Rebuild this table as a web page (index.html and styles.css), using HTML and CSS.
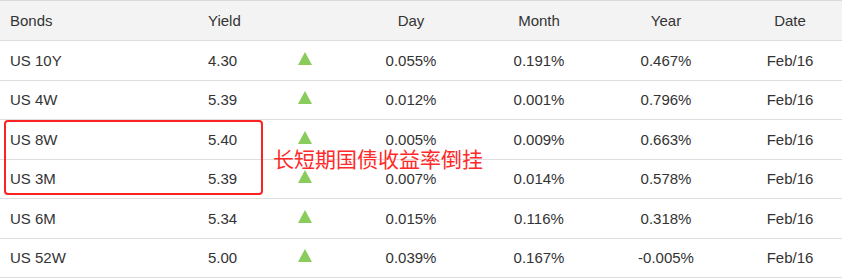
FILE: index.html
```html
<!DOCTYPE html>
<html>
<head>
<meta charset="utf-8">
<link rel="stylesheet" href="styles.css">
</head>
<body>
<div class="wrap">
  <div class="table">
    <div class="row head">
      <div class="c bond">Bonds</div>
      <div class="c yield">Yield</div>
      <div class="c arrow"></div>
      <div class="c mid">Day</div>
      <div class="c mid">Month</div>
      <div class="c mid">Year</div>
      <div class="c mid">Date</div>
    </div>
    <div class="row">
      <div class="c bond">US 10Y</div><div class="c yield">4.30</div>
      <div class="c arrow"><svg class="up" viewBox="0 0 14 13"><polygon points="7,0 14,13 0,13"/></svg></div>
      <div class="c mid">0.055%</div><div class="c mid">0.191%</div><div class="c mid">0.467%</div><div class="c mid">Feb/16</div>
    </div>
    <div class="row">
      <div class="c bond">US 4W</div><div class="c yield">5.39</div>
      <div class="c arrow"><svg class="up" viewBox="0 0 14 13"><polygon points="7,0 14,13 0,13"/></svg></div>
      <div class="c mid">0.012%</div><div class="c mid">0.001%</div><div class="c mid">0.796%</div><div class="c mid">Feb/16</div>
    </div>
    <div class="row">
      <div class="c bond">US 8W</div><div class="c yield">5.40</div>
      <div class="c arrow"><svg class="up" viewBox="0 0 14 13"><polygon points="7,0 14,13 0,13"/></svg></div>
      <div class="c mid">0.005%</div><div class="c mid">0.009%</div><div class="c mid">0.663%</div><div class="c mid">Feb/16</div>
    </div>
    <div class="row">
      <div class="c bond">US 3M</div><div class="c yield">5.39</div>
      <div class="c arrow"><svg class="up" viewBox="0 0 14 13"><polygon points="7,0 14,13 0,13"/></svg></div>
      <div class="c mid">0.007%</div><div class="c mid">0.014%</div><div class="c mid">0.578%</div><div class="c mid">Feb/16</div>
    </div>
    <div class="row">
      <div class="c bond">US 6M</div><div class="c yield">5.34</div>
      <div class="c arrow"><svg class="up" viewBox="0 0 14 13"><polygon points="7,0 14,13 0,13"/></svg></div>
      <div class="c mid">0.015%</div><div class="c mid">0.116%</div><div class="c mid">0.318%</div><div class="c mid">Feb/16</div>
    </div>
    <div class="row">
      <div class="c bond">US 52W</div><div class="c yield">5.00</div>
      <div class="c arrow"><svg class="up" viewBox="0 0 14 13"><polygon points="7,0 14,13 0,13"/></svg></div>
      <div class="c mid">0.039%</div><div class="c mid">0.167%</div><div class="c mid">-0.005%</div><div class="c mid">Feb/16</div>
    </div>
  </div>
  <div class="highlight"></div>
  <div class="note">长短期国债收益率倒挂</div>
</div>
</body>
</html>
```
FILE: styles.css
```css
html, body {
  margin: 0;
  padding: 0;
  background: #fff;
}
body {
  font-family: "Liberation Sans", Arial, sans-serif;
  font-size: 15px;
  color: #333;
}
.wrap {
  position: relative;
  width: 842px;
}
.table {
  border-top: 1px solid #d9d9d9;
}
.row {
  display: grid;
  grid-template-columns: 198px 80px 54px 158px 98px 156px 92px;
  height: 38.5px;
  align-items: center;
  border-bottom: 1px solid #dedede;
}
.row.head {
  background: #f3f3f3;
  height: 39px;
}
.c {
  white-space: nowrap;
}
.bond {
  padding-left: 10px;
}
.yield {
  padding-left: 10px;
}
.arrow {
  display: flex;
  justify-content: center;
  align-items: center;
  padding-bottom: 4px;
}
.up {
  width: 14px;
  height: 13px;
  display: block;
}
.up polygon {
  fill: #8acc5c;
}
.mid {
  text-align: center;
}
.highlight {
  position: absolute;
  left: 4px;
  top: 120px;
  width: 255px;
  height: 71px;
  border: 2px solid #fa2222;
  border-radius: 4px;
}
.note {
  position: absolute;
  left: 273px;
  top: 145px;
  font-family: "Noto Sans CJK SC", sans-serif;
  font-size: 21px;
  line-height: 26px;
  color: #ff2a2a;
  white-space: nowrap;
}
```
